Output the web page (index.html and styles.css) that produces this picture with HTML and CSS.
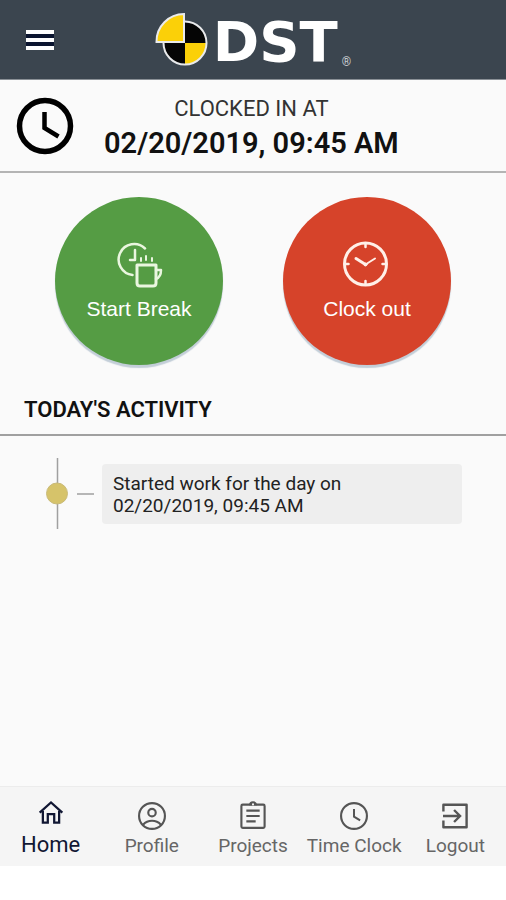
FILE: index.html
```html
<!DOCTYPE html>
<html lang="en">
<head>
<meta charset="utf-8">
<meta name="viewport" content="width=device-width, initial-scale=1">
<title>DST Time Clock</title>
<link rel="stylesheet" href="styles.css">
</head>
<body>
<div class="app">
  <header class="topbar">
    <button class="menu" type="button" aria-label="Menu">
      <svg width="28" height="22" viewBox="0 0 28 22"><path fill="#0b1530" d="M0 1h28v20H0z"/><path fill="#fff" d="M0 1h28v4H0zM0 9h28v4H0zM0 17h28v4H0z"/></svg>
    </button>
    <div class="brand">
      <svg class="emblem" width="54" height="56" viewBox="0 0 54 56" aria-hidden="true">
        <circle cx="30" cy="31" r="21.500" fill="#050505"/>
        <path fill="#fbd008" d="M30 31h21.500a21.500 21.500 0 0 1-21.500 21.500z"/>
        <circle cx="30" cy="31" r="21.500" fill="none" stroke="#e9eaec" stroke-width="2"/>
        <path fill="#fbd008" stroke="#e9eaec" stroke-width="2" d="M29 30V2A27.500 27.500 0 0 0 1.500 30z"/>
      </svg>
      <span class="wordmark">DST</span>
      <span class="registered">®</span>
    </div>
  </header>

  <section class="status">
    <svg class="status-clock" width="58" height="58" viewBox="0 0 58 58" aria-hidden="true">
      <circle cx="29" cy="29" r="25.500" fill="none" stroke="#000" stroke-width="5.500"/>
      <path fill="none" stroke="#000" stroke-width="4.500" d="M28.500 15v16l14 8.500"/>
    </svg>
    <div class="status-text">
      <p class="status-label">CLOCKED IN AT</p>
      <p class="status-time">02/20/2019, 09:45 AM</p>
    </div>
  </section>

  <main class="content">
    <div class="actions">
      <button class="action action-break" type="button">
        <svg width="48" height="48" viewBox="0 0 48 48" fill="none" stroke="#eaf6df" stroke-width="2.500" stroke-linecap="round" stroke-linejoin="round">
          <path d="M30 8.500A15.500 15.500 0 1 0 17.500 35"/>
          <path d="M20 10v10h-5"/>
          <path stroke-width="3" d="M22 25h19v18q0 3-3 3H25q-3 0-3-3z"/>
          <path d="M41 30h5q0 7-5 9"/>
          <path stroke-width="2" d="M26 21v-3M31 20v-4M37 21v-3"/>
        </svg>
        <span>Start Break</span>
      </button>
      <button class="action action-out" type="button">
        <svg width="48" height="48" viewBox="0 0 48 48" fill="none" stroke="#fff0e8" stroke-linecap="round">
          <circle cx="22.500" cy="24" r="21" stroke-width="3"/>
          <path stroke-width="2.500" d="M22.500 4v3M22.500 41v3M2.500 24h3M39.500 24h3"/>
          <path stroke-width="3" d="M13 18.500l9.500 6"/>
          <path stroke-width="2" d="M22.500 24.500l9.500-6"/>
          <circle cx="22.500" cy="24.500" r="1.500" fill="#fff0e8"/>
        </svg>
        <span>Clock out</span>
      </button>
    </div>

    <h2 class="heading">TODAY'S ACTIVITY</h2>

    <ol class="timeline">
      <li class="entry">
        <svg class="marker" width="50" height="72" viewBox="0 0 50 72" aria-hidden="true">
          <path stroke="#a0a0a0" stroke-width="1.500" d="M11.500 0v71M31 36h17"/>
          <circle cx="11" cy="35.500" r="10.500" fill="#d6c36a" stroke="#c9ba78" stroke-width="1"/>
        </svg>
        <p class="entry-card">Started work for the day on<br>02/20/2019, 09:45 AM</p>
      </li>
    </ol>
  </main>

  <nav class="tabs">
    <a class="tab tab-active" href="#home">
      <svg width="32" height="32" viewBox="0 0 24 24" fill="none" stroke="#111733" stroke-width="1.700"><path d="M3.500 11.700L12 4.100l8.500 7.600M5.900 10.500v8.700h3.700v-6.300h4.800v6.300h3.700v-8.700"/></svg>
      <span>Home</span>
    </a>
    <a class="tab" href="#profile">
      <svg width="32" height="32" viewBox="0 0 24 24" fill="none" stroke="#555" stroke-width="1.600"><circle cx="12" cy="12" r="9.700"/><circle cx="12" cy="9.500" r="2.800"/><path d="M5.300 18.500q2.700-2.900 6.700-2.900t6.700 2.900"/></svg>
      <span>Profile</span>
    </a>
    <a class="tab" href="#projects">
      <svg width="32" height="32" viewBox="0 0 24 24" fill="none" stroke="#555" stroke-width="1.600"><rect x="3.300" y="3.500" width="17.400" height="17.400" rx="1"/><path d="M7 8h10M7 12h10M7 16h7"/><path fill="#555" stroke="none" d="M9 4a3 3 0 0 1 6 0z"/><circle cx="12" cy="3.300" r=".8" fill="#f5f5f5" stroke="none"/></svg>
      <span>Projects</span>
    </a>
    <a class="tab" href="#time-clock">
      <svg width="32" height="32" viewBox="0 0 24 24" fill="none" stroke="#555" stroke-width="1.600"><circle cx="12" cy="12" r="9.700"/><path stroke-width="1.500" d="M12 6.700v5.800l4.600 2.800"/></svg>
      <span>Time Clock</span>
    </a>
    <a class="tab" href="#logout">
      <svg width="32" height="32" viewBox="0 0 24 24" fill="none" stroke="#555" stroke-width="1.800"><path stroke-linejoin="round" d="M3.300 8.700V3.600h17.400v16.800H3.300v-5.100"/><path d="M3 12h12.500M11.300 7.500l4.500 4.500-4.500 4.500"/></svg>
      <span>Logout</span>
    </a>
  </nav>
</div>
</body>
</html>
```
FILE: styles.css
```css
* {
  box-sizing: border-box;
}

body {
  margin: 0;
  background: #fff;
  color: #111;
  font-family: Roboto, "Liberation Sans", sans-serif;
}

p,
h2,
ol {
  margin: 0;
  padding: 0;
}

button {
  border: 0;
  padding: 0;
  cursor: pointer;
}

.app {
  display: flex;
  flex-direction: column;
  min-height: 100vh;
  padding-bottom: 34px;
}

.topbar {
  display: grid;
  grid-template-columns: 1fr auto 1fr;
  align-items: center;
  height: 80px;
  padding: 0 26px;
  background: #3b454f;
  border-bottom: 1px solid #8a9096;
}

.menu {
  display: flex;
  justify-self: start;
  background: none;
}

.brand {
  display: flex;
  align-items: center;
  gap: 4px;
  color: #fff;
}

.wordmark {
  padding-top: 4px;
  font: bold 56px/56px "DejaVu Sans", sans-serif;
}

.registered {
  align-self: flex-end;
  font-size: 12px;
  line-height: 16px;
  color: #c4c9ce;
}

.status {
  display: flex;
  align-items: center;
  height: 93px;
  padding: 0 16px;
  gap: 30px;
  background: #fafafa;
  border-bottom: 2px solid #b4b4b4;
}

.status-text {
  padding-top: 2px;
  text-align: center;
}

.status-label {
  font-size: 22px;
  line-height: 32px;
  color: #333;
}

.status-time {
  font-size: 29px;
  font-weight: 600;
  line-height: 36px;
}

.content {
  flex: 1;
  background: #fafafa;
}

.actions {
  display: flex;
  justify-content: center;
  gap: 60px;
  padding: 24px 0;
}

.action {
  display: flex;
  flex-direction: column;
  align-items: center;
  gap: 9px;
  width: 168px;
  height: 168px;
  padding-top: 43px;
  border-radius: 50%;
  box-shadow: 0 3px 1px #c3ced8;
  color: #fff;
  font: 21px/24px "Liberation Sans", sans-serif;
}

.action-break {
  background: #559c44;
}

.action-out {
  background: #d6432a;
}

.heading {
  padding: 6px 24px 9px;
  border-bottom: 2px solid #a0a0a0;
  font-size: 22px;
  font-weight: 600;
  line-height: 30px;
}

.timeline {
  padding: 22px 44px 22px 46px;
  list-style: none;
}

.entry {
  display: flex;
  align-items: center;
  gap: 6px;
}

.entry-card {
  flex: 1;
  padding: 9px 11px 7px;
  border-radius: 4px;
  background: #eee;
  color: #222;
  font-size: 19px;
  line-height: 22px;
}

.tabs {
  display: grid;
  grid-template-columns: repeat(5, 1fr);
  height: 80px;
  background: #f5f5f5;
  border-top: 1px solid #ececec;
}

.tab {
  display: flex;
  flex-direction: column;
  align-items: center;
  padding-top: 13px;
  color: #666;
  font-size: 19px;
  line-height: 28px;
  text-decoration: none;
  white-space: nowrap;
}

.tab-active {
  padding-top: 10px;
  color: #111733;
  font-size: 22px;
  line-height: 32px;
}
```
